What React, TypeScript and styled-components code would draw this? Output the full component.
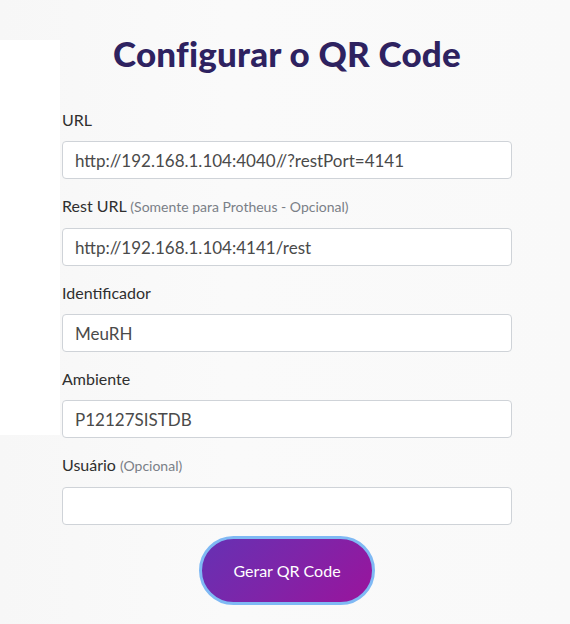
import React from "react";
import styled, { createGlobalStyle } from "styled-components";

const Global = createGlobalStyle`
  html, body { margin: 0; padding: 0; }
  body {
    width: 570px;
    height: 624px;
    overflow: hidden;
    font-family: "Lato", "Noto Sans", sans-serif;
    background:
      linear-gradient(#ffffff, #ffffff) 0 40px / 60px 395px no-repeat,
      linear-gradient(90deg, #f7f7f7 0%, #fafafa 40%, #f9f9f9 100%);
  }
`;

const Page = styled.main`
  width: 450px;
  padding: 31px 0 0 62px;
  display: flex;
  flex-direction: column;
`;

const Title = styled.h1`
  margin: 0 0 35px;
  text-align: center;
  font-family: "Lato", sans-serif;
  font-weight: 900;
  font-size: 35px;
  line-height: 44px;
  color: #2e2260;
  letter-spacing: 0.2px;
`;

const Form = styled.form`
  display: flex;
  flex-direction: column;
  gap: 17px;
`;

const Field = styled.div`
  display: flex;
  flex-direction: column;
  gap: 11px;
`;

const Label = styled.label`
  font-size: 16px;
  line-height: 20px;
  color: #2f2f2f;
`;

const Hint = styled.span`
  font-size: 14px;
  color: #7a7f87;
`;

const Input = styled.input`
  box-sizing: border-box;
  width: 450px;
  height: 38px;
  padding: 0 12px;
  border: 1px solid #cfd3d8;
  border-radius: 4px;
  background: #ffffff;
  font-family: "Lato", sans-serif;
  font-size: 17px;
  color: #4a4a4a;
  outline: none;
`;

const ButtonRow = styled.div`
  display: flex;
  justify-content: center;
  margin-top: -6px;
`;

const Button = styled.button`
  box-sizing: border-box;
  width: 176px;
  height: 69px;
  border-radius: 35px;
  border: 3px solid #7fb9f4;
  background: linear-gradient(135deg, #6631b3 0%, #7f24a8 50%, #9a149c 100%);
  color: #ffffff;
  font-family: "Lato", sans-serif;
  font-size: 16px;
  cursor: pointer;
`;

const fields = [
  { label: "URL", hint: "", value: "http://192.168.1.104:4040//?restPort=4141" },
  { label: "Rest URL", hint: "(Somente para Protheus - Opcional)", value: "http://192.168.1.104:4141/rest" },
  { label: "Identificador", hint: "", value: "MeuRH" },
  { label: "Ambiente", hint: "", value: "P12127SISTDB" },
  { label: "Usuário", hint: "(Opcional)", value: "" },
];

export default function App() {
  return (
    <>
      <Global />
      <Page>
        <Title>Configurar o QR Code</Title>
        <Form onSubmit={(e) => e.preventDefault()}>
          {fields.map((f) => (
            <Field key={f.label}>
              <Label>
                {f.label} {f.hint && <Hint>{f.hint}</Hint>}
              </Label>
              <Input defaultValue={f.value} />
            </Field>
          ))}
          <ButtonRow>
            <Button type="submit">Gerar QR Code</Button>
          </ButtonRow>
        </Form>
      </Page>
    </>
  );
}
